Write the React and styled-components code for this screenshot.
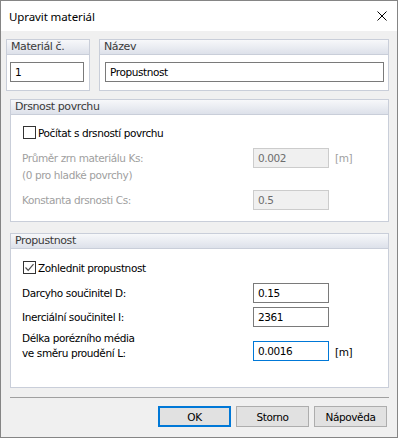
import React from 'react'
import styled, { createGlobalStyle } from 'styled-components'

const GlobalStyle = createGlobalStyle`
  html, body {
    margin: 0;
    padding: 0;
    background: #fff;
  }
  * {
    box-sizing: border-box;
  }
`

const Window = styled.div`
  width: 398px;
  height: 438px;
  border: 1px solid #858585;
  display: flex;
  flex-direction: column;
  background: #f0f0f0;
  font-family: 'DejaVu Sans', Verdana, sans-serif;
  font-size: 10.5px;
  letter-spacing: -0.4px;
  color: #000;
`

const TitleBar = styled.div`
  height: 30px;
  flex: none;
  background: #fff;
  display: flex;
  align-items: center;
  justify-content: space-between;
  padding: 0 10px 0 8px;
  font-family: 'Noto Sans', 'Open Sans', sans-serif;
  font-size: 11.5px;
  letter-spacing: -0.1px;
`

const CloseIcon = () => (
  <svg width="10" height="10" viewBox="0 0 10 10">
    <path d="M0.5 0.5 L9.5 9.5 M9.5 0.5 L0.5 9.5" stroke="#000" strokeWidth="1" fill="none" />
  </svg>
)

const Body = styled.div`
  flex: 1;
  display: flex;
  flex-direction: column;
  padding: 8px 8px 0 8px;
`

const TopRow = styled.div`
  display: flex;
  gap: 9px;
  margin-left: -3px;
`

const Group = styled.div`
  width: ${p => p.width || 'auto'};
  flex: ${p => (p.grow ? 1 : 'none')};
  margin-top: ${p => p.top || 0}px;
  margin-left: ${p => p.indent || 0}px;
  border: 1px solid #c9ced9;
  background: #fff;
  display: flex;
  flex-direction: column;
`

const GroupHeader = styled.div`
  height: 15px;
  line-height: 14px;
  padding-left: 4px;
  font-size: 11px;
  color: #3a3a3a;
  background: linear-gradient(#f7f8fa, #dde1ea);
  border-bottom: 1px solid #c9ced9;
`

const GroupBody = styled.div`
  padding: ${p => p.pad};
  display: flex;
  flex-direction: column;
`

const TextBox = styled.div`
  width: ${p => p.width}px;
  height: 20px;
  flex: none;
  border: 1px solid ${p => (p.disabled ? '#cccccc' : p.focused ? '#0078d7' : '#7a7a7a')};
  background: ${p => (p.disabled ? '#f0f0f0' : '#fff')};
  color: ${p => (p.disabled ? '#6d6d6d' : '#000')};
  padding-left: 4px;
  line-height: 18px;
`

const CheckRow = styled.label`
  display: flex;
  align-items: center;
  height: 13px;
  margin-left: 1px;
  gap: 2px;
`

const Box = styled.span`
  width: 13px;
  height: 13px;
  border: 1px solid #333;
  background: #fff;
  display: flex;
  align-items: center;
  justify-content: center;
`

const FieldRow = styled.div`
  display: flex;
  align-items: ${p => (p.bottom ? 'flex-end' : 'center')};
  margin-top: ${p => p.top}px;
  color: ${p => (p.disabled ? '#a0a0a0' : '#000')};
`

const FieldLabel = styled.div`
  width: 231px;
  line-height: 15px;
`

const Note = styled.div`
  line-height: 14px;
  color: #a0a0a0;
`

const Unit = styled.span`
  margin-left: 6px;
  margin-bottom: ${p => p.lift || 0}px;
  color: ${p => (p.disabled ? '#a0a0a0' : '#000')};
`

const Separator = styled.div`
  height: 1px;
  margin: 9px 0 0 1px;
  background: #a0a0a0;
`

const ButtonBar = styled.div`
  display: flex;
  justify-content: flex-end;
  gap: 5px;
  margin: 8px 2px 0 0;
`

const Button = styled.div`
  width: 73px;
  height: 21px;
  display: flex;
  align-items: center;
  justify-content: center;
  background: #e1e1e1;
  border: ${p => (p.primary ? '2px solid #0078d7' : '1px solid #adadad')};
`

const Checkbox = ({ checked, children }) => (
  <CheckRow>
    <Box>
      {checked && (
        <svg width="11" height="11" viewBox="0 0 11 11">
          <path d="M1.5 5.5 L4.2 8.3 L9.5 2.2" stroke="#4d4d4d" strokeWidth="1.2" fill="none" />
        </svg>
      )}
    </Box>
    <span>{children}</span>
  </CheckRow>
)

export default function App() {
  return (
    <>
      <GlobalStyle />
      <Window>
        <TitleBar>
          <span>Upravit materiál</span>
          <CloseIcon />
        </TitleBar>
        <Body>
          <TopRow>
            <Group width="84px">
              <GroupHeader>Materiál č.</GroupHeader>
              <GroupBody pad="7px 0 8px 3px">
                <TextBox width={74}>1</TextBox>
              </GroupBody>
            </Group>
            <Group grow>
              <GroupHeader>Název</GroupHeader>
              <GroupBody pad="7px 0 8px 5px">
                <TextBox width={279}>Propustnost</TextBox>
              </GroupBody>
            </Group>
          </TopRow>

          <Group top={8} indent={1}>
            <GroupHeader>Drsnost povrchu</GroupHeader>
            <GroupBody pad="11px 0 11px 11px">
              <Checkbox>Počítat s drsností povrchu</Checkbox>
              <FieldRow top={9} disabled>
                <FieldLabel>Průměr zrn materiálu Ks:</FieldLabel>
                <TextBox width={76} disabled>0.002</TextBox>
                <Unit disabled>[m]</Unit>
              </FieldRow>
              <Note>(0 pro hladké povrchy)</Note>
              <FieldRow top={8} disabled>
                <FieldLabel>Konstanta drsnosti Cs:</FieldLabel>
                <TextBox width={76} disabled>0.5</TextBox>
              </FieldRow>
            </GroupBody>
          </Group>

          <Group top={11} indent={1}>
            <GroupHeader>Propustnost</GroupHeader>
            <GroupBody pad="12px 0 26px 11px">
              <Checkbox checked>Zohlednit propustnost</Checkbox>
              <FieldRow top={9}>
                <FieldLabel>Darcyho součinitel D:</FieldLabel>
                <TextBox width={76}>0.15</TextBox>
              </FieldRow>
              <FieldRow top={4}>
                <FieldLabel>Inerciální součinitel I:</FieldLabel>
                <TextBox width={76}>2361</TextBox>
              </FieldRow>
              <FieldRow top={4} bottom>
                <FieldLabel>
                  Délka porézního média
                  <br />
                  ve směru proudění L:
                </FieldLabel>
                <TextBox width={76} focused>0.0016</TextBox>
                <Unit lift={3}>[m]</Unit>
              </FieldRow>
            </GroupBody>
          </Group>

          <Separator />
          <ButtonBar>
            <Button primary>OK</Button>
            <Button>Storno</Button>
            <Button>Nápověda</Button>
          </ButtonBar>
        </Body>
      </Window>
    </>
  )
}
